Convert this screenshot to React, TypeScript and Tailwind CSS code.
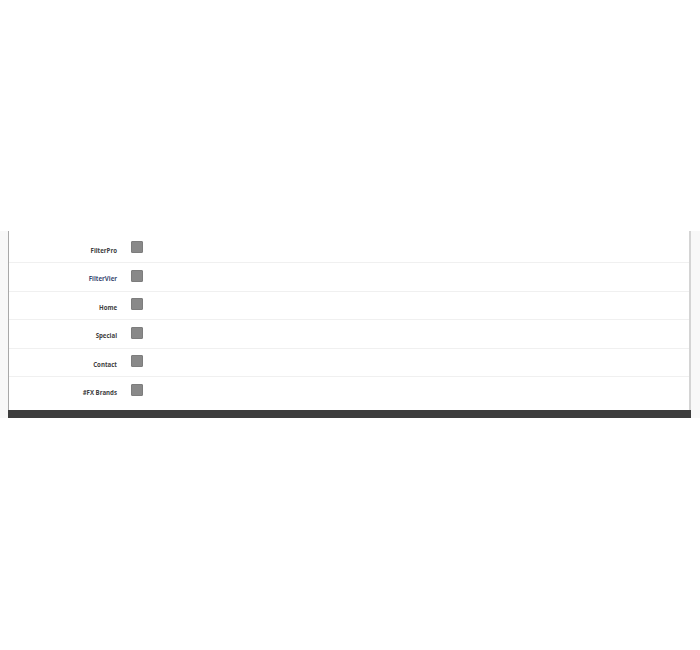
const items = [
  { label: 'FilterPro', active: false },
  { label: 'FilterVier', active: true },
  { label: 'Home', active: false },
  { label: 'Special', active: false },
  { label: 'Contact', active: false },
  { label: '#FX Brands', active: false },
];

export default function App() {
  return (
    <div className="min-h-[650px] bg-white" style={{ fontFamily: '"Open Sans", "Liberation Sans", sans-serif' }}>
      <div className="h-[231px]" />
      <div className="bg-[#f8f8f8] pl-2 pr-[9px]">
        <div className="bg-white border-l border-l-[#a8a8a8] border-r-2 border-r-[#d4d4d4]">
          <div className="pt-[3.5px] pb-[4.5px]">
            {items.map((item, i) => (
              <div
                key={item.label}
                className={`flex h-[28.5px] items-start pt-[6.5px] ${i < items.length - 1 ? 'border-b border-[#f0f0f0]' : ''}`}
              >
                <div
                  className={`w-[108px] pt-[6.5px] text-right text-[6.1px] font-bold leading-none ${item.active ? 'text-[#3a4a72]' : 'text-[#404040]'}`}
                >
                  {item.label}
                </div>
                <div className="ml-[14px] h-[12px] w-[12px] rounded-[1px] border border-[#7d7d7d] bg-[#898989]" />
              </div>
            ))}
          </div>
        </div>
        <div className="h-[8px] bg-[#3d3d3d]" />
      </div>
    </div>
  );
}
